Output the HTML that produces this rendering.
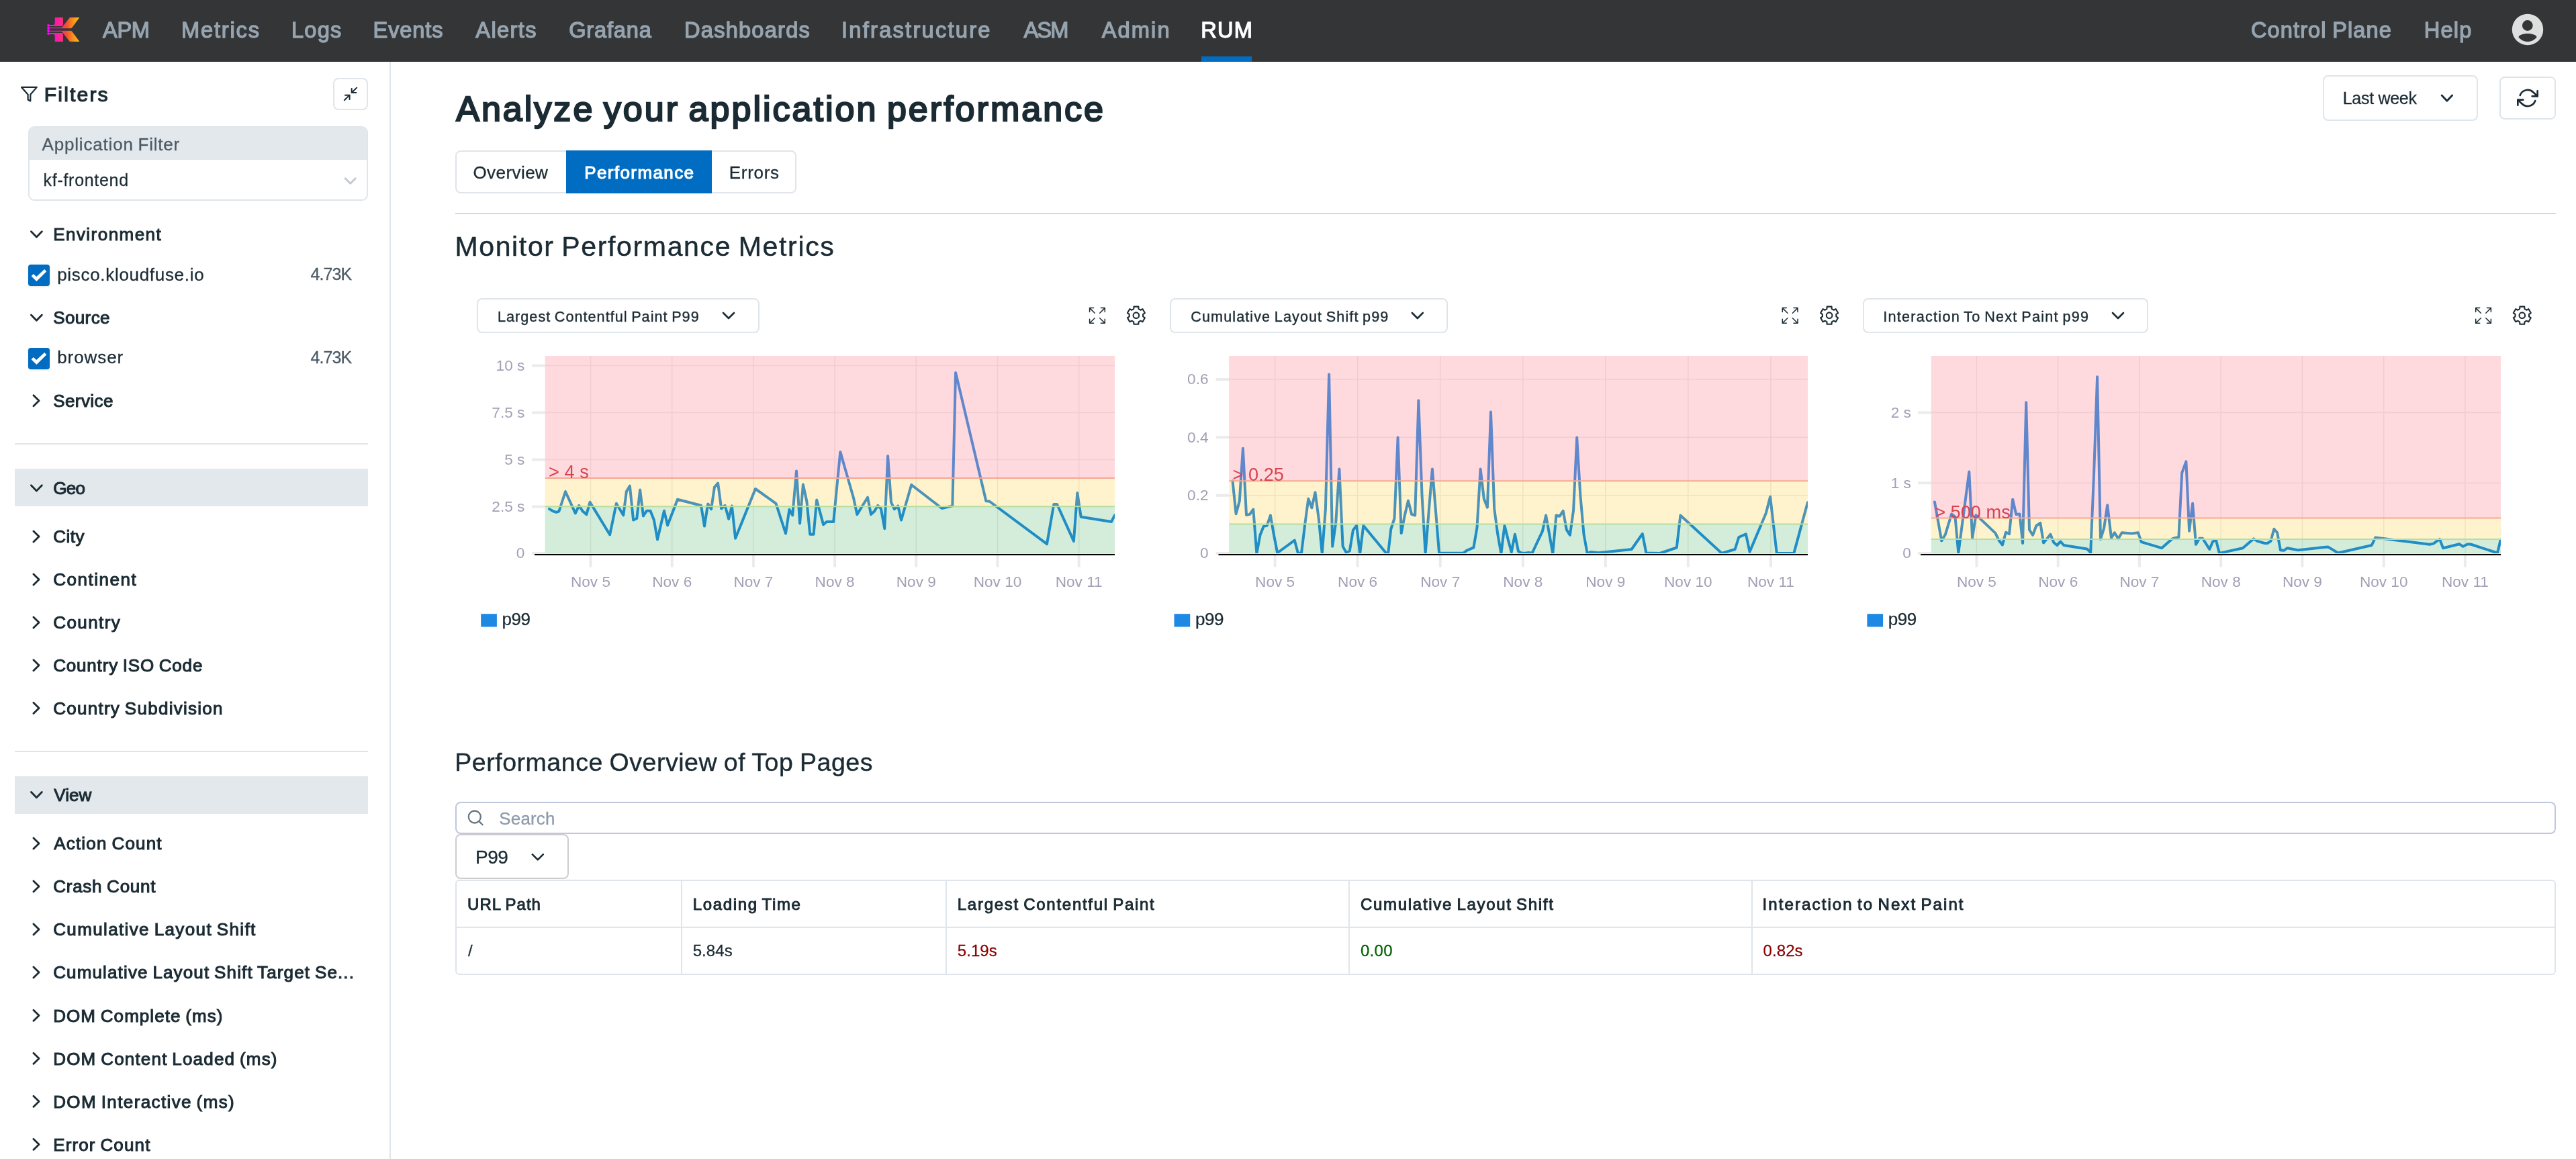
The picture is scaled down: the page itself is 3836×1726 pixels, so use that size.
<!DOCTYPE html>
<html lang="en"><head><meta charset="utf-8"><title>RUM - Performance</title>
<style>
html,body{margin:0;padding:0;background:#fff;}
body{width:3836px;height:1726px;overflow:hidden;position:relative;font-family:"Liberation Sans",sans-serif;color:#1b2b34;}
.t{position:absolute;white-space:pre;line-height:1;margin:0;padding:0;display:block;text-decoration:none;font-weight:400;}
.abs{position:absolute;}
nav,aside,main,section,header{position:absolute;left:0;top:0;}
svg{position:absolute;overflow:visible;}
.bar{position:absolute;left:22px;width:526px;height:56px;background:#e3e8ec;}
.hr{position:absolute;left:22px;width:526px;height:2px;background:#dfe5ea;}
.btn{position:absolute;box-sizing:border-box;border:2px solid #dfe5ea;border-radius:8px;background:#fff;}
.cb{position:absolute;width:32px;height:32px;border-radius:4px;background:#006dc2;box-shadow:0 1px 3px rgba(0,0,0,.12);}
table{position:absolute;border-collapse:separate;border-spacing:0;table-layout:fixed;}
#app{position:absolute;left:0;top:0;width:3836px;height:1726px;will-change:transform;}
@media (max-width:2500px){body{width:1918px;height:863px;}#app{zoom:0.5;}}
</style></head><body><div id="app">
<nav style="width:3836px;height:92px;background:#343537;">
<svg style="left:60px;top:15px" width="70" height="60" viewBox="60 15 70 60">
<defs><linearGradient id="lg" gradientUnits="userSpaceOnUse" x1="71" y1="0" x2="118.5" y2="0">
<stop offset="0" stop-color="#ff00ff"/><stop offset="0.28" stop-color="#fd1aa8"/><stop offset="0.47" stop-color="#f7337a"/><stop offset="0.6" stop-color="#f4512c"/><stop offset="0.8" stop-color="#f7901e"/><stop offset="1" stop-color="#ffc20a"/></linearGradient></defs>
<g fill="url(#lg)" stroke="none">
<path d="M81.7 25.9H93.9V36.5Q93.9 38.9 91.5 38.9H72V37.1H79.3Q81.7 37.1 81.7 34.7Z"/>
<path d="M81.7 62H93.9V51.5Q93.9 49.1 91.5 49.1H72V50.9H79.3Q81.7 50.9 81.7 53.3Z"/>
<path d="M104 25.9H118.4L107.6 40.7Q106.6 42.2 104.8 42.2H72V41.1H92.1Z"/>
<path d="M104 62H118.4L107.6 47.3Q106.6 45.8 104.8 45.8H72V46.9H92.1Z"/>
<circle cx="72" cy="38" r="1.9"/><circle cx="72" cy="42" r="1.9"/><circle cx="72" cy="46.1" r="1.9"/><circle cx="72" cy="50.1" r="1.9"/>
</g></svg>
<a class="t" style="left:153.0px;top:28.5px;font-size:32.6px;color:#96a4af;letter-spacing:-0.30px;-webkit-text-stroke:1.30px #96a4af;">APM</a>
<a class="t" style="left:270.0px;top:28.5px;font-size:32.6px;color:#96a4af;letter-spacing:1.83px;-webkit-text-stroke:1.30px #96a4af;">Metrics</a>
<a class="t" style="left:434.0px;top:28.5px;font-size:32.6px;color:#96a4af;letter-spacing:1.20px;-webkit-text-stroke:1.30px #96a4af;">Logs</a>
<a class="t" style="left:555.5px;top:28.5px;font-size:32.6px;color:#96a4af;letter-spacing:0.90px;-webkit-text-stroke:1.30px #96a4af;">Events</a>
<a class="t" style="left:708.3px;top:28.5px;font-size:32.6px;color:#96a4af;letter-spacing:1.38px;-webkit-text-stroke:1.30px #96a4af;">Alerts</a>
<a class="t" style="left:847.2px;top:28.5px;font-size:32.6px;color:#96a4af;letter-spacing:0.83px;-webkit-text-stroke:1.30px #96a4af;">Grafana</a>
<a class="t" style="left:1019.0px;top:28.5px;font-size:32.6px;color:#96a4af;letter-spacing:1.24px;-webkit-text-stroke:1.30px #96a4af;">Dashboards</a>
<a class="t" style="left:1253.0px;top:28.5px;font-size:32.6px;color:#96a4af;letter-spacing:2.27px;-webkit-text-stroke:1.30px #96a4af;">Infrastructure</a>
<a class="t" style="left:1524.4px;top:28.5px;font-size:32.6px;color:#96a4af;letter-spacing:-1.80px;-webkit-text-stroke:1.30px #96a4af;">ASM</a>
<a class="t" style="left:1640.7px;top:28.5px;font-size:32.6px;color:#96a4af;letter-spacing:2.15px;-webkit-text-stroke:1.30px #96a4af;">Admin</a>
<a class="t" style="left:1788.3px;top:28.5px;font-size:32.6px;color:#ffffff;letter-spacing:1.15px;-webkit-text-stroke:1.30px #ffffff;">RUM</a>
<div class="abs" style="left:1789px;top:84px;width:75px;height:8px;background:#006dc2"></div>
<a class="t" style="left:3351.9px;top:28.5px;font-size:32.6px;color:#96a4af;letter-spacing:1.11px;word-spacing:-1.69px;-webkit-text-stroke:1.30px #96a4af;">Control Plane</a>
<a class="t" style="left:3609.7px;top:28.5px;font-size:32.6px;color:#96a4af;letter-spacing:1.23px;-webkit-text-stroke:1.30px #96a4af;">Help</a>
<svg style="left:3740px;top:20px" width="48" height="48" viewBox="3740 20 48 48"><circle cx="3764" cy="44" r="23.2" fill="#dfdfdf"/>
<circle cx="3763.8" cy="38" r="7.9" fill="#343537"/>
<path d="M3750.4 55.2C3751.2 51.6 3759 50 3764 50C3769 50 3776.8 51.6 3777.6 55.2C3774.5 59.4 3769.5 62 3764 62C3758.5 62 3753.5 59.4 3750.4 55.2Z" fill="#343537"/></svg>
</nav>
<aside style="top:92px;width:582px;height:1634px;">
<div class="abs" style="left:580px;top:0;width:2px;height:1635px;background:#dfe5ea"></div>
</aside>
<aside style="left:0;top:0;width:0;height:0">
<svg style="left:0;top:0" width="1" height="1"><polygon points="32,129.9 54.8,129.9 45.3,140.8 45.3,150.5 41.6,148.5 41.6,140.8" fill="none" stroke="#1b2b34" stroke-width="2.2" stroke-linejoin="round"/></svg>
<h2 class="t" style="left:65.8px;top:125.5px;font-size:30.2px;letter-spacing:2.12px;-webkit-text-stroke:1.21px #1b2b34;">Filters</h2>
<div class="btn" style="left:496px;top:116px;width:52px;height:48px;"></div>
<svg style="left:0;top:0" width="1" height="1"><g fill="none" stroke="#1b2b34" stroke-width="2" stroke-linecap="round" stroke-linejoin="round"><line x1="531.2" y1="130.6" x2="524" y2="137.8"/><polyline points="523.7,132 523.7,138.1 530.4,138.1"/><line x1="512.8" y1="149.2" x2="520.3" y2="141.9"/><polyline points="514,141.7 520.6,141.7 520.6,148"/></g></svg>
<div class="abs" style="left:42px;top:188px;width:506px;height:111px;box-sizing:border-box;border:2px solid #dfe5ea;border-radius:9px;background:#fff;overflow:hidden"><div style="height:48px;background:#e3e8ec"></div></div>
<span class="t" style="left:62.6px;top:202.3px;font-size:26px;color:#4b5a64;letter-spacing:0.81px;word-spacing:-1.28px;-webkit-text-stroke:0.29px #4b5a64;">Application Filter</span>
<span class="t" style="left:64.6px;top:255.8px;font-size:25px;letter-spacing:0.70px;-webkit-text-stroke:0.27px #1b2b34;">kf-frontend</span>
<svg style="left:0;top:0" width="1" height="1"><polyline points="514.2,265.8 521.7,273.2 529.2,265.8" fill="none" stroke="#c3cad1" stroke-width="3" stroke-linecap="round" stroke-linejoin="round"/></svg>
<svg style="left:0;top:0" width="1" height="1"><polyline points="46.4,344.8 54.4,353.0 62.4,344.8" fill="none" stroke="#1b2b34" stroke-width="2.8" stroke-linecap="round" stroke-linejoin="round"/></svg><span class="t" style="left:79.2px;top:335.9px;font-size:26px;letter-spacing:1.46px;-webkit-text-stroke:1.04px #1b2b34;">Environment</span>
<div class="cb" style="left:42px;top:394px"></div>
<span class="t" style="left:85.2px;top:395.5px;font-size:26px;letter-spacing:0.69px;-webkit-text-stroke:0.29px #1b2b34;">pisco.kloudfuse.io</span>
<span class="t" style="left:462.4px;top:396.3px;font-size:25px;color:#4b5a64;letter-spacing:-0.88px;-webkit-text-stroke:0.27px #4b5a64;">4.73K</span>
<svg style="left:0;top:0" width="1" height="1"><polyline points="46.4,469.1 54.4,477.3 62.4,469.1" fill="none" stroke="#1b2b34" stroke-width="2.8" stroke-linecap="round" stroke-linejoin="round"/></svg><span class="t" style="left:79.2px;top:460.2px;font-size:26px;letter-spacing:0.38px;-webkit-text-stroke:1.04px #1b2b34;">Source</span>
<div class="cb" style="left:42px;top:518px"></div>
<span class="t" style="left:85.2px;top:519.3px;font-size:26px;letter-spacing:0.93px;-webkit-text-stroke:0.29px #1b2b34;">browser</span>
<span class="t" style="left:462.4px;top:520.1px;font-size:25px;color:#4b5a64;letter-spacing:-0.88px;-webkit-text-stroke:0.27px #4b5a64;">4.73K</span>
<svg style="left:0;top:0" width="1" height="1"><g fill="#fff"><polygon points="46.6,411.3 49.7,408 54.3,412.1 66.2,401 69.3,404.2 54.4,419.1"/><polygon points="46.6,535.3 49.7,532 54.3,536.1 66.2,525 69.3,528.2 54.4,543.1"/></g></svg>
<svg style="left:0;top:0" width="1" height="1"><polyline points="49.9,588.7 58.1,596.7 49.9,604.7" fill="none" stroke="#1b2b34" stroke-width="2.8" stroke-linecap="round" stroke-linejoin="round"/></svg><span class="t" style="left:79.2px;top:584.0px;font-size:26px;letter-spacing:0.43px;-webkit-text-stroke:1.04px #1b2b34;">Service</span>
<div class="hr" style="top:660px"></div>
<div class="bar" style="top:698px"></div>
<svg style="left:0;top:0" width="1" height="1"><polyline points="46.4,722.7 54.4,730.9 62.4,722.7" fill="none" stroke="#1b2b34" stroke-width="2.8" stroke-linecap="round" stroke-linejoin="round"/></svg><span class="t" style="left:79.2px;top:713.8px;font-size:26px;letter-spacing:-0.70px;-webkit-text-stroke:1.04px #1b2b34;">Geo</span>
<svg style="left:0;top:0" width="1" height="1"><polyline points="49.9,791.0 58.1,799.0 49.9,807.0" fill="none" stroke="#1b2b34" stroke-width="2.8" stroke-linecap="round" stroke-linejoin="round"/></svg><span class="t" style="left:79.2px;top:786.3px;font-size:26px;letter-spacing:0.53px;-webkit-text-stroke:1.04px #1b2b34;">City</span>
<svg style="left:0;top:0" width="1" height="1"><polyline points="49.9,854.9 58.1,862.9 49.9,870.9" fill="none" stroke="#1b2b34" stroke-width="2.8" stroke-linecap="round" stroke-linejoin="round"/></svg><span class="t" style="left:79.2px;top:850.2px;font-size:26px;letter-spacing:1.54px;-webkit-text-stroke:1.04px #1b2b34;">Continent</span>
<svg style="left:0;top:0" width="1" height="1"><polyline points="49.9,918.9 58.1,926.9 49.9,934.9" fill="none" stroke="#1b2b34" stroke-width="2.8" stroke-linecap="round" stroke-linejoin="round"/></svg><span class="t" style="left:79.2px;top:914.2px;font-size:26px;letter-spacing:1.42px;-webkit-text-stroke:1.04px #1b2b34;">Country</span>
<svg style="left:0;top:0" width="1" height="1"><polyline points="49.9,982.7 58.1,990.7 49.9,998.7" fill="none" stroke="#1b2b34" stroke-width="2.8" stroke-linecap="round" stroke-linejoin="round"/></svg><span class="t" style="left:79.2px;top:978.0px;font-size:26px;letter-spacing:0.82px;word-spacing:-1.29px;-webkit-text-stroke:1.04px #1b2b34;">Country ISO Code</span>
<svg style="left:0;top:0" width="1" height="1"><polyline points="49.9,1046.5 58.1,1054.5 49.9,1062.5" fill="none" stroke="#1b2b34" stroke-width="2.8" stroke-linecap="round" stroke-linejoin="round"/></svg><span class="t" style="left:79.2px;top:1041.8px;font-size:26px;letter-spacing:1.27px;word-spacing:-1.74px;-webkit-text-stroke:1.04px #1b2b34;">Country Subdivision</span>
<div class="hr" style="top:1118px"></div>
<div class="bar" style="top:1156px"></div>
<svg style="left:0;top:0" width="1" height="1"><polyline points="46.4,1179.5 54.4,1187.7 62.4,1179.5" fill="none" stroke="#1b2b34" stroke-width="2.8" stroke-linecap="round" stroke-linejoin="round"/></svg><span class="t" style="left:80.2px;top:1170.6px;font-size:26px;letter-spacing:0.10px;-webkit-text-stroke:1.04px #1b2b34;">View</span>
<svg style="left:0;top:0" width="1" height="1"><polyline points="49.9,1248.0 58.1,1256.0 49.9,1264.0" fill="none" stroke="#1b2b34" stroke-width="2.8" stroke-linecap="round" stroke-linejoin="round"/></svg><span class="t" style="left:80.2px;top:1243.3px;font-size:26px;letter-spacing:1.20px;word-spacing:-1.66px;-webkit-text-stroke:1.04px #1b2b34;">Action Count</span>
<svg style="left:0;top:0" width="1" height="1"><polyline points="49.9,1312.0 58.1,1320.0 49.9,1328.0" fill="none" stroke="#1b2b34" stroke-width="2.8" stroke-linecap="round" stroke-linejoin="round"/></svg><span class="t" style="left:79.2px;top:1307.3px;font-size:26px;letter-spacing:0.76px;word-spacing:-1.23px;-webkit-text-stroke:1.04px #1b2b34;">Crash Count</span>
<svg style="left:0;top:0" width="1" height="1"><polyline points="49.9,1376.1 58.1,1384.1 49.9,1392.1" fill="none" stroke="#1b2b34" stroke-width="2.8" stroke-linecap="round" stroke-linejoin="round"/></svg><span class="t" style="left:79.2px;top:1371.4px;font-size:26px;letter-spacing:1.37px;word-spacing:-1.84px;-webkit-text-stroke:1.04px #1b2b34;">Cumulative Layout Shift</span>
<svg style="left:0;top:0" width="1" height="1"><polyline points="49.9,1440.1 58.1,1448.1 49.9,1456.1" fill="none" stroke="#1b2b34" stroke-width="2.8" stroke-linecap="round" stroke-linejoin="round"/></svg><span class="t" style="left:79.2px;top:1435.4px;font-size:26px;letter-spacing:1.14px;word-spacing:-1.61px;-webkit-text-stroke:1.04px #1b2b34;">Cumulative Layout Shift Target Se...</span>
<svg style="left:0;top:0" width="1" height="1"><polyline points="49.9,1504.2 58.1,1512.2 49.9,1520.2" fill="none" stroke="#1b2b34" stroke-width="2.8" stroke-linecap="round" stroke-linejoin="round"/></svg><span class="t" style="left:79.2px;top:1499.5px;font-size:26px;letter-spacing:1.06px;word-spacing:-1.53px;-webkit-text-stroke:1.04px #1b2b34;">DOM Complete (ms)</span>
<svg style="left:0;top:0" width="1" height="1"><polyline points="49.9,1568.2 58.1,1576.2 49.9,1584.2" fill="none" stroke="#1b2b34" stroke-width="2.8" stroke-linecap="round" stroke-linejoin="round"/></svg><span class="t" style="left:79.2px;top:1563.5px;font-size:26px;letter-spacing:1.19px;word-spacing:-1.66px;-webkit-text-stroke:1.04px #1b2b34;">DOM Content Loaded (ms)</span>
<svg style="left:0;top:0" width="1" height="1"><polyline points="49.9,1632.3 58.1,1640.3 49.9,1648.3" fill="none" stroke="#1b2b34" stroke-width="2.8" stroke-linecap="round" stroke-linejoin="round"/></svg><span class="t" style="left:79.2px;top:1627.6px;font-size:26px;letter-spacing:1.38px;word-spacing:-1.85px;-webkit-text-stroke:1.04px #1b2b34;">DOM Interactive (ms)</span>
<svg style="left:0;top:0" width="1" height="1"><polyline points="49.9,1696.3 58.1,1704.3 49.9,1712.3" fill="none" stroke="#1b2b34" stroke-width="2.8" stroke-linecap="round" stroke-linejoin="round"/></svg><span class="t" style="left:79.2px;top:1691.6px;font-size:26px;letter-spacing:1.14px;word-spacing:-1.61px;-webkit-text-stroke:1.04px #1b2b34;">Error Count</span>
</aside>
<main style="left:0;top:0;width:0;height:0">
<h1 class="t" style="left:679.2px;top:136.0px;font-size:52px;letter-spacing:3.02px;word-spacing:-3.96px;-webkit-text-stroke:2.39px #1b2b34;">Analyze your application performance</h1>
<div class="btn" style="left:3459px;top:112px;width:231px;height:68px;border-color:#dee5eb;border-radius:8px"></div>
<span class="t" style="left:3488.7px;top:134.4px;font-size:25px;letter-spacing:-0.26px;word-spacing:-0.19px;-webkit-text-stroke:0.27px #1b2b34;">Last week</span>
<svg style="left:0;top:0" width="1" height="1"><polyline points="3636.1,142.0 3643.9,150.3 3651.7,142.0" fill="none" stroke="#1b2b34" stroke-width="2.8" stroke-linecap="round" stroke-linejoin="round"/></svg>
<div class="btn" style="left:3722px;top:114px;width:84px;height:64px;border-color:#dee5eb;border-radius:8px"></div>
<svg style="left:3748px;top:129.8px" width="32" height="32" viewBox="0 0 24 24" fill="none" stroke="#1b2b34" stroke-width="2" stroke-linecap="round" stroke-linejoin="round"><polyline points="23 4 23 10 17 10"/><polyline points="1 20 1 14 7 14"/><path d="M3.51 9a9 9 0 0 1 14.85-3.36L23 10M1 14l4.64 4.36A9 9 0 0 0 20.49 15"/></svg>
<div class="btn" style="left:678px;top:224px;width:508px;height:64px;border-radius:8px"></div>
<div class="abs" style="left:843px;top:224px;width:217px;height:64px;background:#006dc2"></div>
<span class="t" style="left:704.4px;top:244.0px;font-size:26px;letter-spacing:0.44px;-webkit-text-stroke:0.29px #1b2b34;">Overview</span>
<span class="t" style="left:870.2px;top:244.0px;font-size:26px;color:#ffffff;letter-spacing:1.40px;-webkit-text-stroke:1.04px #ffffff;">Performance</span>
<span class="t" style="left:1085.7px;top:244.0px;font-size:26px;letter-spacing:0.72px;-webkit-text-stroke:0.29px #1b2b34;">Errors</span>
<div class="abs" style="left:678px;top:317px;width:3128px;height:2px;background:#d3d9de"></div>
<h2 class="t" style="left:677.4px;top:347.0px;font-size:41px;letter-spacing:1.65px;word-spacing:-2.39px;-webkit-text-stroke:0.45px #1b2b34;">Monitor Performance Metrics</h2>
<section style="left:0;top:0;width:0;height:0">
<div class="btn" style="left:710px;top:444px;width:421px;height:52px;"></div>
<span class="t" style="left:741.0px;top:461.2px;font-size:21.6px;letter-spacing:1.03px;word-spacing:-1.42px;-webkit-text-stroke:0.4px #1b2b34;">Largest Contentful Paint P99</span>
<svg style="left:0;top:0" width="1" height="1"><polyline points="1077.0,466.0 1085.0,474.0 1093.0,466.0" fill="none" stroke="#1b2b34" stroke-width="2.6" stroke-linecap="round" stroke-linejoin="round"/></svg>
<svg style="left:0;top:0" width="1" height="1"><path d="M1628.6 458.6H1622.6V464.6M1622.6 458.6L1630.2 466.2M1639.3 458.6H1645.3V464.6M1645.3 458.6L1637.7 466.2M1628.6 481.3H1622.6V475.3M1622.6 481.3L1630.2 473.7M1639.3 481.3H1645.3V475.3M1645.3 481.3L1637.7 473.7" fill="none" stroke="#1b2b34" stroke-width="1.5" stroke-linecap="round" stroke-linejoin="round"/><path d="M1695.6 460.1 L1695.3 456.6 L1688.5 456.6 L1688.2 460.1 L1685.4 461.7 L1682.3 460.2 L1678.9 466.1 L1681.7 468.1 L1681.7 471.3 L1678.9 473.3 L1682.3 479.2 L1685.4 477.7 L1688.2 479.3 L1688.5 482.8 L1695.3 482.8 L1695.6 479.3 L1698.4 477.7 L1701.5 479.2 L1704.9 473.3 L1702.1 471.3 L1702.1 468.1 L1704.9 466.1 L1701.5 460.2 L1698.4 461.7Z" fill="none" stroke="#1b2b34" stroke-width="2.1" stroke-linejoin="round"/><circle cx="1691.9" cy="469.7" r="4.3" fill="none" stroke="#1b2b34" stroke-width="2.1"/><path d="M879.5 530V824M1000.7 530V824M1121.9 530V824M1243.1 530V824M1364.3 530V824M1485.5 530V824M1606.7 530V824M811.6 544.5H1660.0M811.6 614.5H1660.0M811.6 684.5H1660.0M811.6 754.5H1660.0M811.6 824.0H1660.0" stroke="#000" stroke-opacity="0.08" stroke-width="1.6" fill="none"/><path d="M879.5 827V844.5M1000.7 827V844.5M1121.9 827V844.5M1243.1 827V844.5M1364.3 827V844.5M1485.5 827V844.5M1606.7 827V844.5M792.1 544.5H811.6M792.1 614.5H811.6M792.1 684.5H811.6M792.1 754.5H811.6M792.1 824.0H811.6" stroke="#ebebeb" stroke-width="4" fill="none"/><clipPath id="cp1"><rect x="811.6" y="530" width="848.4" height="294"/></clipPath><path d="M817.9 757.9L823.6 761.3L828.4 762.8L832.4 761.5L842.0 732.0L856.8 764.3L862.2 752.8L867.6 761.3L873.4 766.1L878.5 747.7L908.1 796.3L917.8 749.8L928.3 767.3L932.9 731.7L937.9 723.6L943.1 774.5L948.3 771.9L953.1 729.6L958.0 768.5L963.0 760.7L968.5 760.7L973.9 774.5L979.0 803.5L989.0 760.7L994.1 782.4L1008.9 743.7L1044.0 752.8L1049.0 783.6L1054.2 750.4L1059.1 758.2L1063.9 725.6L1069.1 719.6L1074.2 757.6L1079.6 752.8L1085.1 772.7L1089.9 753.4L1095.1 801.7L1124.9 728.0L1155.5 749.8L1170.0 794.5L1175.4 758.8L1180.2 767.3L1186.0 701.5L1191.1 779.4L1195.9 721.6L1201.4 746.8L1206.2 795.7L1211.6 795.7L1216.2 744.6L1226.1 781.2L1231.0 777.0L1241.2 777.0L1251.3 672.9L1270.8 740.7L1276.3 766.1L1292.0 740.7L1297.0 766.1L1302.2 761.3L1307.3 752.8L1311.9 757.6L1317.3 787.2L1322.1 679.0L1327.0 748.0L1331.8 758.2L1337.2 753.4L1342.1 774.5L1357.2 722.0L1402.6 757.0L1418.3 753.4L1423.1 554.9L1468.4 746.2L1473.3 746.5L1559.0 810.2L1569.3 751.0L1574.1 751.0L1598.9 805.9L1604.3 734.1L1609.7 769.7L1655.0 777.0L1659.9 767.3" clip-path="url(#cp1)" fill="none" stroke="#1e88e5" stroke-width="4" stroke-linejoin="round" stroke-linecap="round"/><rect x="811.6" y="530" width="848.4" height="182.0" fill="#fc8491" fill-opacity="0.3"/><rect x="811.6" y="712.0" width="848.4" height="42.3" fill="#ffc107" fill-opacity="0.2"/><rect x="811.6" y="754.3" width="848.4" height="69.7" fill="#28a745" fill-opacity="0.2"/><path d="M811.6 712.0H1660.0" stroke="#f5a791" stroke-width="2"/><path d="M811.6 754.3H1660.0" stroke="#b6de9f" stroke-width="2"/><path d="M796.0 826H1660.0" stroke="#000" stroke-width="2"/><text x="781.3" y="551.7" text-anchor="end" font-size="22.6" fill="#a2a0b5">10 s</text><text x="781.3" y="621.7" text-anchor="end" font-size="22.6" fill="#a2a0b5">7.5 s</text><text x="781.3" y="691.7" text-anchor="end" font-size="22.6" fill="#a2a0b5">5 s</text><text x="781.3" y="761.7" text-anchor="end" font-size="22.6" fill="#a2a0b5">2.5 s</text><text x="781.3" y="831.2" text-anchor="end" font-size="22.6" fill="#a2a0b5">0</text><text x="879.5" y="874" text-anchor="middle" font-size="22.6" fill="#a2a0b5">Nov 5</text><text x="1000.7" y="874" text-anchor="middle" font-size="22.6" fill="#a2a0b5">Nov 6</text><text x="1121.9" y="874" text-anchor="middle" font-size="22.6" fill="#a2a0b5">Nov 7</text><text x="1243.1" y="874" text-anchor="middle" font-size="22.6" fill="#a2a0b5">Nov 8</text><text x="1364.3" y="874" text-anchor="middle" font-size="22.6" fill="#a2a0b5">Nov 9</text><text x="1485.5" y="874" text-anchor="middle" font-size="22.6" fill="#a2a0b5">Nov 10</text><text x="1606.7" y="874" text-anchor="middle" font-size="22.6" fill="#a2a0b5">Nov 11</text><text x="817.1" y="712.2" font-size="27.2" fill="#d9434f">> 4 s</text><rect x="716.2" y="914.2" width="23.7" height="19.3" fill="#1e88e5"/></svg>
<span class="t" style="left:747.6px;top:909.0px;font-size:26px;letter-spacing:-0.45px;-webkit-text-stroke:0.29px #1b2b34;">p99</span>
</section>
<section style="left:0;top:0;width:0;height:0">
<div class="btn" style="left:1742px;top:444px;width:414px;height:52px;"></div>
<span class="t" style="left:1773.3px;top:461.2px;font-size:21.6px;letter-spacing:1.09px;word-spacing:-1.47px;-webkit-text-stroke:0.4px #1b2b34;">Cumulative Layout Shift p99</span>
<svg style="left:0;top:0" width="1" height="1"><polyline points="2102.8,466.0 2110.8,474.0 2118.8,466.0" fill="none" stroke="#1b2b34" stroke-width="2.6" stroke-linecap="round" stroke-linejoin="round"/></svg>
<svg style="left:0;top:0" width="1" height="1"><path d="M2660.3 458.6H2654.3V464.6M2654.3 458.6L2661.9 466.2M2671.0 458.6H2677.0V464.6M2677.0 458.6L2669.4 466.2M2660.3 481.3H2654.3V475.3M2654.3 481.3L2661.9 473.7M2671.0 481.3H2677.0V475.3M2677.0 481.3L2669.4 473.7" fill="none" stroke="#1b2b34" stroke-width="1.5" stroke-linecap="round" stroke-linejoin="round"/><path d="M2727.8 460.1 L2727.5 456.6 L2720.7 456.6 L2720.4 460.1 L2717.6 461.7 L2714.5 460.2 L2711.1 466.1 L2713.9 468.1 L2713.9 471.3 L2711.1 473.3 L2714.5 479.2 L2717.6 477.7 L2720.4 479.3 L2720.7 482.8 L2727.5 482.8 L2727.8 479.3 L2730.6 477.7 L2733.7 479.2 L2737.1 473.3 L2734.3 471.3 L2734.3 468.1 L2737.1 466.1 L2733.7 460.2 L2730.6 461.7Z" fill="none" stroke="#1b2b34" stroke-width="2.1" stroke-linejoin="round"/><circle cx="2724.1" cy="469.7" r="4.3" fill="none" stroke="#1b2b34" stroke-width="2.1"/><path d="M1898.6 530V824M2021.6 530V824M2144.7 530V824M2267.8 530V824M2390.8 530V824M2513.8 530V824M2636.9 530V824M1830.1 565.0H2692.0M1830.1 651.3H2692.0M1830.1 737.7H2692.0M1830.1 824.0H2692.0" stroke="#000" stroke-opacity="0.08" stroke-width="1.6" fill="none"/><path d="M1898.6 827V844.5M2021.6 827V844.5M2144.7 827V844.5M2267.8 827V844.5M2390.8 827V844.5M2513.8 827V844.5M2636.9 827V844.5M1810.6 565.0H1830.1M1810.6 651.3H1830.1M1810.6 737.7H1830.1M1810.6 824.0H1830.1" stroke="#ebebeb" stroke-width="4" fill="none"/><clipPath id="cp2"><rect x="1830.1" y="530" width="861.9" height="294"/></clipPath><path d="M1835.5 716.3L1840.6 765.3L1845.8 746.2L1850.9 667.7L1856.0 767.0L1861.1 765.9L1866.3 758.5L1871.4 824.4L1876.5 796.8L1881.6 783.9L1886.8 782.7L1891.9 767.5L1897.0 796.8L1902.2 823.3L1927.8 804.7L1932.9 823.8L1938.0 823.8L1943.2 781.1L1948.3 742.8L1953.4 756.3L1958.5 733.2L1963.7 772.0L1968.8 824.4L1973.9 758.0L1979.1 557.5L1984.2 813.7L1989.3 777.7L1994.4 698.5L1999.6 813.7L2004.7 822.7L2009.8 820.5L2014.9 789.5L2020.1 782.7L2025.2 824.4L2030.3 782.7L2064.2 823.8L2067.2 823.8L2071.3 787.8L2076.5 772.0L2081.6 651.6L2086.7 794.0L2091.8 767.5L2097.0 745.6L2102.1 765.9L2107.2 767.5L2112.4 596.4L2117.5 737.1L2122.6 824.4L2127.7 761.4L2132.9 698.5L2138.0 761.4L2143.1 823.8L2179.0 823.8L2184.1 819.9L2194.4 815.4L2199.5 785.6L2204.6 698.5L2209.8 742.8L2214.9 755.7L2220.0 613.6L2225.2 757.4L2230.3 795.7L2235.4 824.4L2240.5 782.7L2245.7 803.6L2250.8 822.1L2255.9 795.7L2261.0 821.0L2266.2 823.8L2271.3 823.8L2276.4 822.9L2281.5 823.8L2296.9 791.2L2302.1 767.5L2307.2 795.7L2312.3 824.4L2317.4 767.5L2322.6 768.7L2327.7 760.8L2332.8 788.9L2337.9 796.8L2343.1 759.7L2348.2 651.6L2353.3 737.1L2358.5 795.7L2363.6 823.8L2368.7 822.1L2380.0 823.3L2429.7 818.0L2445.8 795.0L2451.4 823.5L2471.9 824.0L2496.8 815.5L2502.4 767.6L2563.9 823.9L2583.7 818.0L2589.3 800.0L2599.9 795.3L2605.5 821.7L2629.7 764.5L2636.1 739.7L2645.8 823.9L2671.3 823.9L2691.8 748.4" clip-path="url(#cp2)" fill="none" stroke="#1e88e5" stroke-width="4" stroke-linejoin="round" stroke-linecap="round"/><rect x="1830.1" y="530" width="861.9" height="186.2" fill="#fc8491" fill-opacity="0.3"/><rect x="1830.1" y="716.2" width="861.9" height="64.4" fill="#ffc107" fill-opacity="0.2"/><rect x="1830.1" y="780.6" width="861.9" height="43.4" fill="#28a745" fill-opacity="0.2"/><path d="M1830.1 716.2H2692.0" stroke="#f5a791" stroke-width="2"/><path d="M1830.1 780.6H2692.0" stroke="#b6de9f" stroke-width="2"/><path d="M1814.5 826H2692.0" stroke="#000" stroke-width="2"/><text x="1799.5" y="572.2" text-anchor="end" font-size="22.6" fill="#a2a0b5">0.6</text><text x="1799.5" y="658.5" text-anchor="end" font-size="22.6" fill="#a2a0b5">0.4</text><text x="1799.5" y="744.9" text-anchor="end" font-size="22.6" fill="#a2a0b5">0.2</text><text x="1799.5" y="831.2" text-anchor="end" font-size="22.6" fill="#a2a0b5">0</text><text x="1898.6" y="874" text-anchor="middle" font-size="22.6" fill="#a2a0b5">Nov 5</text><text x="2021.6" y="874" text-anchor="middle" font-size="22.6" fill="#a2a0b5">Nov 6</text><text x="2144.7" y="874" text-anchor="middle" font-size="22.6" fill="#a2a0b5">Nov 7</text><text x="2267.8" y="874" text-anchor="middle" font-size="22.6" fill="#a2a0b5">Nov 8</text><text x="2390.8" y="874" text-anchor="middle" font-size="22.6" fill="#a2a0b5">Nov 9</text><text x="2513.8" y="874" text-anchor="middle" font-size="22.6" fill="#a2a0b5">Nov 10</text><text x="2636.9" y="874" text-anchor="middle" font-size="22.6" fill="#a2a0b5">Nov 11</text><text x="1835.6" y="716.4" font-size="27.2" fill="#d9434f">> 0.25</text><rect x="1748.5" y="914.2" width="23.7" height="19.3" fill="#1e88e5"/></svg>
<span class="t" style="left:1779.9px;top:909.0px;font-size:26px;letter-spacing:-0.45px;-webkit-text-stroke:0.29px #1b2b34;">p99</span>
</section>
<section style="left:0;top:0;width:0;height:0">
<div class="btn" style="left:2774px;top:444px;width:425px;height:52px;"></div>
<span class="t" style="left:2804.2px;top:461.2px;font-size:21.6px;letter-spacing:1.27px;word-spacing:-1.66px;-webkit-text-stroke:0.4px #1b2b34;">Interaction To Next Paint p99</span>
<svg style="left:0;top:0" width="1" height="1"><polyline points="3146.0,466.0 3154.0,474.0 3162.0,466.0" fill="none" stroke="#1b2b34" stroke-width="2.6" stroke-linecap="round" stroke-linejoin="round"/></svg>
<svg style="left:0;top:0" width="1" height="1"><path d="M3692.7 458.6H3686.7V464.6M3686.7 458.6L3694.3 466.2M3703.4 458.6H3709.4V464.6M3709.4 458.6L3701.8 466.2M3692.7 481.3H3686.7V475.3M3686.7 481.3L3694.3 473.7M3703.4 481.3H3709.4V475.3M3709.4 481.3L3701.8 473.7" fill="none" stroke="#1b2b34" stroke-width="1.5" stroke-linecap="round" stroke-linejoin="round"/><path d="M3759.5 460.1 L3759.2 456.6 L3752.4 456.6 L3752.1 460.1 L3749.3 461.7 L3746.2 460.2 L3742.8 466.1 L3745.6 468.1 L3745.6 471.3 L3742.8 473.3 L3746.2 479.2 L3749.3 477.7 L3752.1 479.3 L3752.4 482.8 L3759.2 482.8 L3759.5 479.3 L3762.3 477.7 L3765.4 479.2 L3768.8 473.3 L3766.0 471.3 L3766.0 468.1 L3768.8 466.1 L3765.4 460.2 L3762.3 461.7Z" fill="none" stroke="#1b2b34" stroke-width="2.1" stroke-linejoin="round"/><circle cx="3755.8" cy="469.7" r="4.3" fill="none" stroke="#1b2b34" stroke-width="2.1"/><path d="M2943.4 530V824M3064.7 530V824M3185.9 530V824M3307.2 530V824M3428.4 530V824M3549.7 530V824M3670.9 530V824M2875.7 614.4H3724.0M2875.7 719.3H3724.0M2875.7 824.0H3724.0" stroke="#000" stroke-opacity="0.08" stroke-width="1.6" fill="none"/><path d="M2943.4 827V844.5M3064.7 827V844.5M3185.9 827V844.5M3307.2 827V844.5M3428.4 827V844.5M3549.7 827V844.5M3670.9 827V844.5M2856.2 614.4H2875.7M2856.2 719.3H2875.7M2856.2 824.0H2875.7" stroke="#ebebeb" stroke-width="4" fill="none"/><clipPath id="cp3"><rect x="2875.7" y="530" width="848.3" height="294"/></clipPath><path d="M2880.9 747.4L2891.3 805.3L2897.0 795.7L2906.1 765.5L2911.5 769.7L2916.3 823.5L2932.3 702.4L2937.1 801.1L2942.3 767.3L2947.1 770.9L2971.3 793.9L2976.7 804.7L2981.9 811.4L2987.0 792.7L2992.1 795.1L2997.2 743.7L3002.3 766.1L3007.5 765.5L3012.1 809.0L3017.2 599.3L3022.0 789.0L3027.1 796.9L3032.3 783.0L3038.3 778.8L3043.1 808.4L3053.4 795.7L3058.2 807.8L3063.1 812.0L3068.5 806.5L3073.3 812.0L3107.8 817.4L3113.2 822.9L3118.0 708.1L3123.1 561.3L3128.0 802.9L3133.1 786.6L3138.2 752.2L3144.0 801.1L3148.8 793.3L3154.3 802.3L3159.8 793.3L3174.3 794.5L3184.0 793.3L3188.8 807.1L3219.0 816.2L3234.1 802.9L3238.3 801.1L3244.4 799.9L3249.2 704.2L3255.4 687.4L3260.1 790.8L3265.1 749.8L3270.0 810.8L3275.2 801.7L3280.0 801.7L3290.3 818.0L3295.1 806.5L3299.9 804.1L3304.8 823.5L3309.0 822.9L3339.8 816.2L3356.1 802.3L3361.5 805.9L3372.4 809.0L3376.6 809.0L3381.4 805.9L3386.3 787.8L3391.1 793.3L3395.9 819.2L3400.8 819.8L3406.2 816.2L3421.9 819.2L3455.0 815.6L3466.6 814.4L3481.7 823.5L3531.8 812.0L3537.2 800.5L3618.1 810.8L3623.6 809.6L3633.0 802.9L3638.1 816.2L3662.2 810.2L3667.7 813.8L3674.3 810.5L3679.1 810.5L3719.0 823.5L3723.8 803.5" clip-path="url(#cp3)" fill="none" stroke="#1e88e5" stroke-width="4" stroke-linejoin="round" stroke-linecap="round"/><rect x="2875.7" y="530" width="848.3" height="241.6" fill="#fc8491" fill-opacity="0.3"/><rect x="2875.7" y="771.6" width="848.3" height="31.4" fill="#ffc107" fill-opacity="0.2"/><rect x="2875.7" y="803.0" width="848.3" height="21.0" fill="#28a745" fill-opacity="0.2"/><path d="M2875.7 771.6H3724.0" stroke="#f5a791" stroke-width="2"/><path d="M2875.7 803.0H3724.0" stroke="#b6de9f" stroke-width="2"/><path d="M2860.1 826H3724.0" stroke="#000" stroke-width="2"/><text x="2845.8" y="621.6" text-anchor="end" font-size="22.6" fill="#a2a0b5">2 s</text><text x="2845.8" y="726.5" text-anchor="end" font-size="22.6" fill="#a2a0b5">1 s</text><text x="2845.8" y="831.2" text-anchor="end" font-size="22.6" fill="#a2a0b5">0</text><text x="2943.4" y="874" text-anchor="middle" font-size="22.6" fill="#a2a0b5">Nov 5</text><text x="3064.7" y="874" text-anchor="middle" font-size="22.6" fill="#a2a0b5">Nov 6</text><text x="3185.9" y="874" text-anchor="middle" font-size="22.6" fill="#a2a0b5">Nov 7</text><text x="3307.2" y="874" text-anchor="middle" font-size="22.6" fill="#a2a0b5">Nov 8</text><text x="3428.4" y="874" text-anchor="middle" font-size="22.6" fill="#a2a0b5">Nov 9</text><text x="3549.7" y="874" text-anchor="middle" font-size="22.6" fill="#a2a0b5">Nov 10</text><text x="3670.9" y="874" text-anchor="middle" font-size="22.6" fill="#a2a0b5">Nov 11</text><text x="2881.2" y="771.8" font-size="27.2" fill="#d9434f">> 500 ms</text><rect x="2780.4" y="914.2" width="23.7" height="19.3" fill="#1e88e5"/></svg>
<span class="t" style="left:2811.8px;top:909.0px;font-size:26px;letter-spacing:-0.45px;-webkit-text-stroke:0.29px #1b2b34;">p99</span>
</section>
<h2 class="t" style="left:677.3px;top:1117.4px;font-size:37.5px;letter-spacing:0.53px;word-spacing:-1.20px;-webkit-text-stroke:0.41px #1b2b34;">Performance Overview of Top Pages</h2>
<div class="btn" style="left:678px;top:1194px;width:3128px;height:48px;border-color:#bfc7dd;"></div>
<svg style="left:0;top:0" width="1" height="1"><g fill="none" stroke="#6b7884" stroke-width="2.3" stroke-linecap="round"><circle cx="706.8" cy="1216.5" r="9"/><line x1="713.4" y1="1223.1" x2="718.6" y2="1228.3"/></g></svg>
<span class="t" style="left:743.3px;top:1205.9px;font-size:26px;color:#8e9bab;letter-spacing:0.14px;-webkit-text-stroke:0.29px #8e9bab;">Search</span>
<div class="btn" style="left:678px;top:1242px;width:169px;height:67px;border-color:#cbcdd0"></div>
<span class="t" style="left:708.0px;top:1262.7px;font-size:28px;letter-spacing:-0.55px;-webkit-text-stroke:0.31px #1b2b34;">P99</span>
<svg style="left:0;top:0" width="1" height="1"><polyline points="792.8,1272.4 800.8,1280.4 808.8,1272.4" fill="none" stroke="#1b2b34" stroke-width="2.6" stroke-linecap="round" stroke-linejoin="round"/></svg>
<div class="abs" style="left:678px;top:1310px;width:3128px;height:142px;box-sizing:border-box;border:2px solid #dfe5ea;border-radius:6px"></div>
<div class="abs" style="left:680px;top:1380px;width:3124px;height:2px;background:#dfe5ea"></div>
<div class="abs" style="left:1014px;top:1312px;width:2px;height:138px;background:#dfe5ea"></div>
<div class="abs" style="left:1408px;top:1312px;width:2px;height:138px;background:#dfe5ea"></div>
<div class="abs" style="left:2008px;top:1312px;width:2px;height:138px;background:#dfe5ea"></div>
<div class="abs" style="left:2608px;top:1312px;width:2px;height:138px;background:#dfe5ea"></div>
<span class="t" style="left:696.1px;top:1334.7px;font-size:24px;letter-spacing:1.02px;word-spacing:-1.45px;-webkit-text-stroke:0.96px #1b2b34;">URL Path</span>
<span class="t" style="left:697.1px;top:1404.4px;font-size:24px;letter-spacing:0.40px;-webkit-text-stroke:0.26px #1b2b34;">/</span>
<span class="t" style="left:1031.7px;top:1334.7px;font-size:24px;letter-spacing:1.66px;word-spacing:-2.10px;-webkit-text-stroke:0.96px #1b2b34;">Loading Time</span>
<span class="t" style="left:1031.7px;top:1404.4px;font-size:24px;letter-spacing:0.07px;-webkit-text-stroke:0.26px #1b2b34;">5.84s</span>
<span class="t" style="left:1425.8px;top:1334.7px;font-size:24px;letter-spacing:1.73px;word-spacing:-2.16px;-webkit-text-stroke:0.96px #1b2b34;">Largest Contentful Paint</span>
<span class="t" style="left:1425.8px;top:1404.4px;font-size:24px;color:#8b0000;letter-spacing:0.07px;-webkit-text-stroke:0.26px #8b0000;">5.19s</span>
<span class="t" style="left:2025.9px;top:1334.7px;font-size:24px;letter-spacing:1.72px;word-spacing:-2.15px;-webkit-text-stroke:0.96px #1b2b34;">Cumulative Layout Shift</span>
<span class="t" style="left:2025.9px;top:1404.4px;font-size:24px;color:#006400;letter-spacing:0.33px;-webkit-text-stroke:0.26px #006400;">0.00</span>
<span class="t" style="left:2624.6px;top:1334.7px;font-size:24px;letter-spacing:2.10px;word-spacing:-2.53px;-webkit-text-stroke:0.96px #1b2b34;">Interaction to Next Paint</span>
<span class="t" style="left:2625.6px;top:1404.4px;font-size:24px;color:#8b0000;letter-spacing:0.08px;-webkit-text-stroke:0.26px #8b0000;">0.82s</span>
</main>
</div></body></html>
